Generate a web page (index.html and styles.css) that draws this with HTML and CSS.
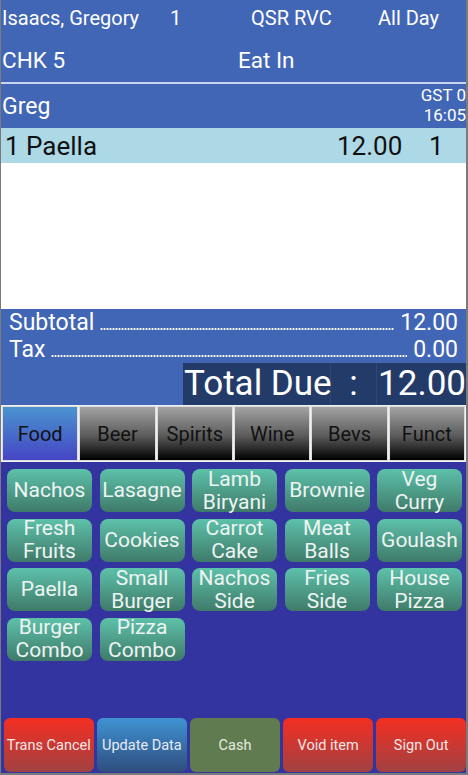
FILE: index.html
```html
<!DOCTYPE html>
<html>
<head>
<meta charset="utf-8">
<link rel="stylesheet" href="styles.css">
</head>
<body>
<div class="app">
  <div class="hdr1">
    <span>Isaacs, Gregory</span><span>1</span><span>QSR RVC</span><span>All Day</span>
  </div>
  <div class="hdr2">
    <span>CHK 5</span><span>Eat In</span>
  </div>
  <div class="hdr3">
    <span class="guest">Greg</span>
    <div class="meta"><span>GST 0</span><span>16:05</span></div>
  </div>
  <div class="lines">
    <div class="line sel">
      <span class="name">1 Paella</span><span class="price">12.00</span><span class="qty">1</span>
    </div>
  </div>
  <div class="totals">
    <div class="trow"><span>Subtotal</span><span class="dots"></span><span>12.00</span></div>
    <div class="trow"><span>Tax</span><span class="dots"></span><span>0.00</span></div>
    <div class="due">
      <span class="due-l">Total Due</span><span class="due-c">:</span><span class="due-v">12.00</span>
    </div>
  </div>
  <div class="tabs">
    <div class="tab active">Food</div>
    <div class="tab">Beer</div>
    <div class="tab">Spirits</div>
    <div class="tab">Wine</div>
    <div class="tab">Bevs</div>
    <div class="tab">Funct</div>
  </div>
  <div class="menu">
    <div class="grid">
      <div class="item">Nachos</div>
      <div class="item">Lasagne</div>
      <div class="item">Lamb<br>Biryani</div>
      <div class="item">Brownie</div>
      <div class="item">Veg<br>Curry</div>
      <div class="item">Fresh<br>Fruits</div>
      <div class="item">Cookies</div>
      <div class="item">Carrot<br>Cake</div>
      <div class="item">Meat<br>Balls</div>
      <div class="item">Goulash</div>
      <div class="item">Paella</div>
      <div class="item">Small<br>Burger</div>
      <div class="item">Nachos<br>Side</div>
      <div class="item">Fries<br>Side</div>
      <div class="item">House<br>Pizza</div>
      <div class="item">Burger<br>Combo</div>
      <div class="item">Pizza<br>Combo</div>
    </div>
    <div class="actions">
      <div class="act red">Trans Cancel</div>
      <div class="act blue">Update Data</div>
      <div class="act green">Cash</div>
      <div class="act red">Void item</div>
      <div class="act red">Sign Out</div>
    </div>
  </div>
</div>
</body>
</html>
```

FILE: styles.css
```css
* { box-sizing: border-box; }
html, body { margin: 0; padding: 0; }
body {
  width: 468px;
  height: 775px;
  font-family: Roboto, "Noto Sans", sans-serif;
  background: #7a7a7a;
}
.app {
  width: 468px;
  height: 775px;
  display: flex;
  flex-direction: column;
  border-left: 1px solid #7a7a7a;
  border-right: 2px solid #7a7a7a;
  border-bottom: 2px solid #7a7a7a;
  background: #fff;
  overflow: hidden;
}
.hdr1 {
  height: 38px;
  background: #4266b6;
  color: #fff;
  font-size: 20px;
  display: grid;
  grid-template-columns: 168px 81px 127px 1fr;
  align-items: center;
  padding-left: 1px;
  padding-bottom: 3px;
  white-space: nowrap;
}
.hdr2 {
  height: 46px;
  background: #4266b6;
  color: #fff;
  font-size: 22.5px;
  display: grid;
  grid-template-columns: 236px 1fr;
  align-items: center;
  padding-left: 1px;
  border-bottom: 2px solid #c9d4ef;
}
.hdr3 {
  height: 44px;
  background: #4266b6;
  color: #fff;
  display: flex;
  align-items: center;
  justify-content: space-between;
  padding-left: 1px;
}
.guest { font-size: 23px; }
.meta {
  display: flex;
  flex-direction: column;
  align-items: flex-end;
  font-size: 17px;
  line-height: 20px;
  margin-top: -3px;
}
.lines {
  flex: 0 0 181px;
  background: #fff;
}
.line {
  height: 35px;
  display: flex;
  align-items: center;
  font-size: 26px;
  color: #111;
  padding-left: 4px;
}
.line.sel { background: #add8e6; }
.name { flex: 1; }
.price { width: 92px; }
.qty { width: 37px; }
.totals {
  height: 96px;
  background: #4266b6;
  color: #fff;
  display: flex;
  flex-direction: column;
}
.trow {
  height: 27px;
  display: flex;
  align-items: baseline;
  font-size: 23px;
  line-height: 28px;
  padding: 0 8px 0 8px;
}
.dots {
  flex: 1;
  height: 2px;
  margin: 0 6px;
  background-image: radial-gradient(circle, #fff 1px, transparent 1.2px);
  background-size: 3px 2px;
  background-repeat: repeat-x;
}
.due {
  margin-left: auto;
  width: 283px;
  height: 42px;
  background: #233b69;
  display: flex;
  align-items: center;
  font-size: 35px;
  line-height: 42px;
}
.due-l {
  width: 148px;
  padding-left: 1px;
  border-right: 1px solid #2e4775;
  white-space: nowrap;
}
.due-c {
  width: 47px;
  text-align: center;
  border-right: 1px solid #2e4775;
}
.due-v { flex: 1; padding-left: 1px; }
.tabs {
  height: 57px;
  display: flex;
  background: #f0f0f0;
  padding: 1px;
  gap: 1px;
}
.tab {
  flex: 1;
  display: flex;
  align-items: center;
  justify-content: center;
  font-size: 20px;
  color: #111;
  background: linear-gradient(#a3a3a3, #5a5a5a 55%, #000);
  border: 1px solid #dcdcdc;
}
.tab.active {
  background: linear-gradient(#4b94cf, #4545c4);
}
.menu {
  flex: 1;
  background: #3434a0;
  display: flex;
  flex-direction: column;
  padding: 7px 0 1px 0;
}
.grid {
  display: grid;
  grid-template-columns: repeat(5, 85px);
  grid-auto-rows: 43px;
  column-gap: 7.5px;
  row-gap: 6.5px;
  padding-left: 6px;
}
.item {
  border-radius: 8px;
  background: linear-gradient(#5dc1aa, #3f7a69);
  color: #eef4f2;
  font-size: 21px;
  line-height: 23px;
  display: flex;
  align-items: center;
  justify-content: center;
  text-align: center;
  white-space: nowrap;
}
.actions {
  margin-top: auto;
  height: 54px;
  display: flex;
  gap: 3.5px;
  padding-left: 3px;
}
.act {
  flex: 1;
  border-radius: 6px;
  color: #f2e6e6;
  font-size: 14.5px;
  display: flex;
  align-items: center;
  justify-content: center;
  white-space: nowrap;
}
.red { background: linear-gradient(#f42e22, #a04242); }
.blue { background: linear-gradient(#3f93d3, #2f4d7e); color: #e6ecf6; }
.green { background: #607b50; color: #e6ece2; }
```
